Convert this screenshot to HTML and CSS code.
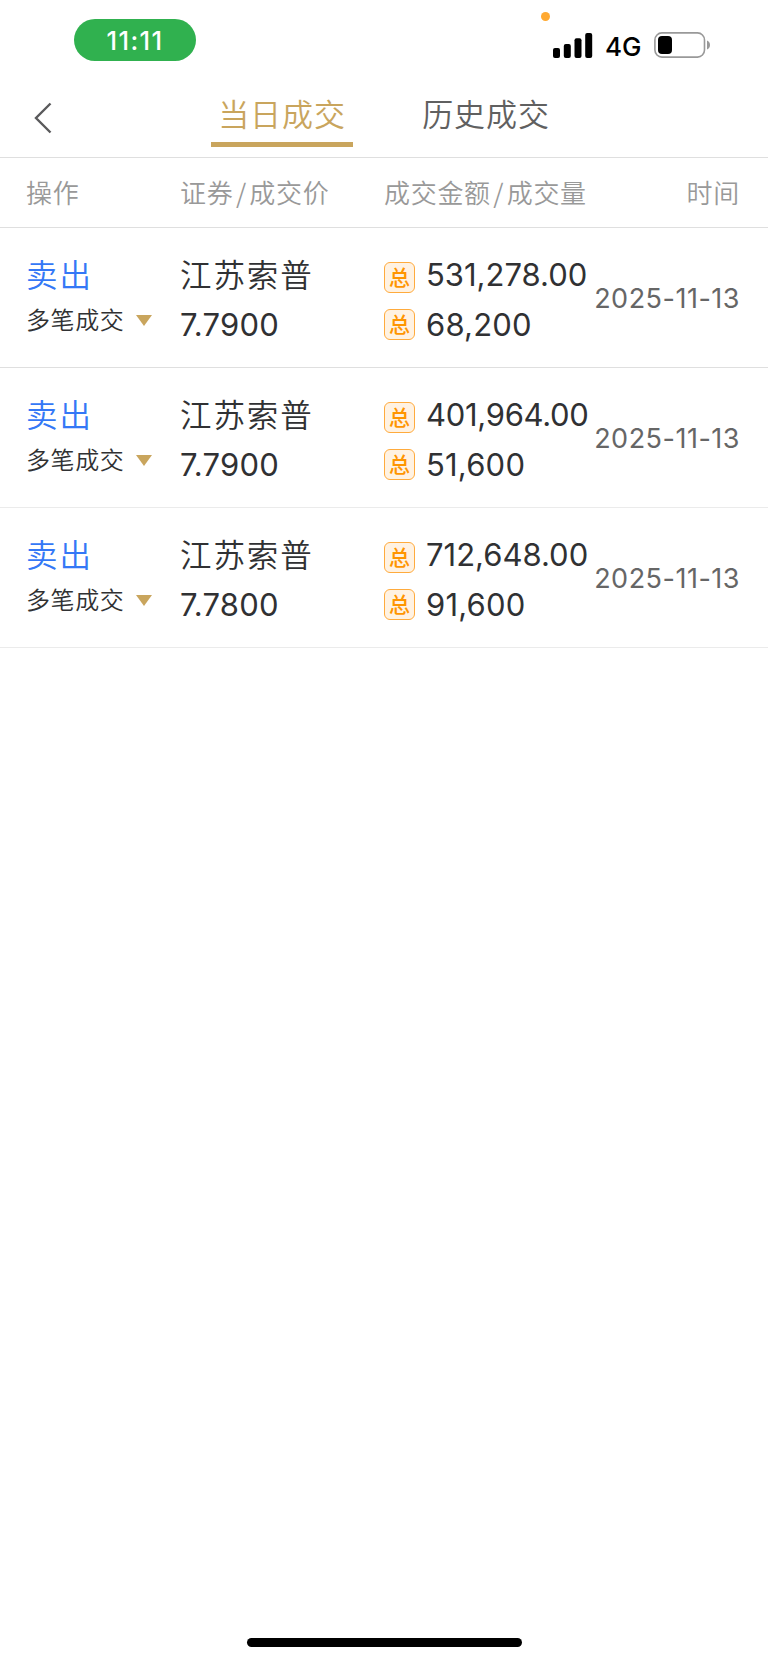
FILE: index.html
```html
<!DOCTYPE html>
<html lang="zh-CN">
<head>
<meta charset="UTF-8">
<meta name="viewport" content="width=device-width, initial-scale=1">
<title>当日成交</title>
<link rel="stylesheet" href="styles.css">
</head>
<body>
<div class="statusbar">
<div class="clock">11:11</div>
<div class="status">
<span class="dot"></span>
<svg class="signal" width="40" height="26" viewBox="0 0 40 26">
<rect x="0" y="15" width="7" height="10" rx="2"/>
<rect x="10.8" y="11" width="7" height="14" rx="2"/>
<rect x="21.5" y="5.2" width="7" height="19.8" rx="2"/>
<rect x="32.2" y="0" width="7" height="25" rx="2"/>
</svg>
<span class="net">4G</span>
<svg class="battery" width="57" height="26" viewBox="0 0 57 26">
<rect x="0.9" y="0.9" width="49.6" height="24.2" rx="7" fill="none" stroke="#999" stroke-width="1.6"/>
<rect x="4" y="4" width="14" height="18" rx="4"/>
<path d="M53 8.5q3 1.4 3 4.5t-3 4.5z" fill="#999"/>
</svg>
</div>
</div>

<div class="navbar">
<svg class="back" width="18" height="32" viewBox="0 0 18 32"><path d="M16.500 1.500L2 16l14.500 14.500" fill="none" stroke="#5a5a5c" stroke-width="2.400"/></svg>
<div class="tabs">
<div class="tab active">当日成交</div>
<div class="tab">历史成交</div>
</div>
</div>

<div class="cols head">
<div>操作</div>
<div>证券<i>/</i>成交价</div>
<div>成交金额<i>/</i>成交量</div>
<div class="right">时间</div>
</div>

<div class="cols deal">
<div>
<div class="side">卖出</div>
<div class="multi">多笔成交<span class="arrow"></span></div>
</div>
<div>
<div class="name">江苏索普</div>
<div class="num price">7.7900</div>
</div>
<div>
<div class="total"><span class="tag">总</span><span class="num">531,278.00</span></div>
<div class="total second"><span class="tag">总</span><span class="num">68,200</span></div>
</div>
<div class="date">2025-11-13</div>
</div>

<div class="cols deal light">
<div>
<div class="side">卖出</div>
<div class="multi">多笔成交<span class="arrow"></span></div>
</div>
<div>
<div class="name">江苏索普</div>
<div class="num price">7.7900</div>
</div>
<div>
<div class="total"><span class="tag">总</span><span class="num tight">401,964.00</span></div>
<div class="total second"><span class="tag">总</span><span class="num">51,600</span></div>
</div>
<div class="date">2025-11-13</div>
</div>

<div class="cols deal light">
<div>
<div class="side">卖出</div>
<div class="multi">多笔成交<span class="arrow"></span></div>
</div>
<div>
<div class="name">江苏索普</div>
<div class="num price">7.7800</div>
</div>
<div>
<div class="total"><span class="tag">总</span><span class="num">712,648.00</span></div>
<div class="total second"><span class="tag">总</span><span class="num">91,600</span></div>
</div>
<div class="date">2025-11-13</div>
</div>

<div class="home"></div>
</body>
</html>
```
FILE: styles.css
```css
*{
	box-sizing:border-box;
}
body{
	margin:0;
	height:1662px;
	display:flex;
	flex-direction:column;
	background:#fff;
	color:#303133;
	font-family:"Noto Sans CJK SC", sans-serif;
	font-weight:350;
	white-space:nowrap;
}
.statusbar{
	height:80px;
	flex:none;
	display:flex;
	justify-content:space-between;
	padding:19px 57px 0 74px;
}
.clock{
	width:122px;
	height:42px;
	border-radius:21px;
	background:#30b14f;
	color:#fff;
	font:500 25.5px/43px Inter, sans-serif;
	letter-spacing:1.4px;
	text-align:center;
}
.status{
	display:flex;
	align-items:flex-start;
	position:relative;
}
.dot{
	position:absolute;
	left:-12px;
	top:-7px;
	width:9px;
	height:9px;
	border-radius:50%;
	background:#ffa931;
}
.signal{
	margin-top:14px;
}
.net{
	width:61px;
	padding-left:12px;
	margin-top:13px;
	color:#000;
	font:500 26px/30px Inter, sans-serif;
}
.battery{
	margin-top:13px;
}
.navbar{
	height:78px;
	flex:none;
	display:flex;
	padding-left:34px;
	border-bottom:1px solid #dfdfdf;
}
.back{
	margin-top:22px;
}
.tabs{
	display:flex;
	gap:62px;
	margin-left:159px;
}
.tab{
	width:142px;
	height:67px;
	padding-top:9px;
	color:#606060;
	font-size:31px;
	line-height:48px;
	letter-spacing:0.9px;
	text-align:center;
}
.active{
	color:#c9a55d;
	border-bottom:5px solid #c9a55d;
}
.cols{
	display:grid;
	grid-template-columns:154px 204px 1fr auto;
	padding:0 28px 0 26px;
	flex:none;
}
.head{
	height:70px;
	border-bottom:1px solid #dfdfdf;
	color:#999;
	font-size:26px;
	line-height:68px;
	letter-spacing:0.7px;
}
.head i{
	font-style:normal;
	padding:0 2.5px;
}
.right{
	text-align:right;
}
.deal{
	height:140px;
	padding-top:24px;
	border-bottom:1px solid #dfdfdf;
}
.light{
	border-color:#ebebeb;
}
.side, .name{
	height:48px;
	font-size:31.5px;
	line-height:42px;
	letter-spacing:1.9px;
}
.side{
	color:#3478f6;
}
.multi{
	display:flex;
	align-items:center;
	height:40px;
	font-size:24px;
	line-height:36px;
	letter-spacing:0.6px;
	padding-bottom:3px;
}
.arrow{
	margin:4px 0 0 12px;
	border:8px solid transparent;
	border-top:11px solid #c9a55d;
	border-bottom:0;
}
.num{
	font:400 31px/48px Inter, sans-serif;
}
.price{
	height:50px;
	line-height:49px;
	letter-spacing:0.2px;
}
.total{
	display:flex;
	align-items:center;
	height:50px;
}
.total .num{
	padding-bottom:4px;
}
.second{
	height:44px;
}
.second .num{
	padding:2px 0 0;
	letter-spacing:0.2px;
}
.tight{
	letter-spacing:-0.3px;
}
.tag{
	width:31px;
	height:31px;
	margin-right:11px;
	border:1px solid #ffab3d;
	border-radius:6px;
	background:#fff2e2;
	color:#ff9500;
	font-size:21px;
	font-weight:500;
	line-height:26px;
	text-align:center;
}
.date{
	margin-top:25px;
	height:44px;
	color:#666;
	font:400 27px/44px Inter, sans-serif;
	letter-spacing:0.5px;
}
.home{
	width:275px;
	height:9px;
	margin:auto auto 15px;
	border-radius:5px;
	background:#000;
}
```
